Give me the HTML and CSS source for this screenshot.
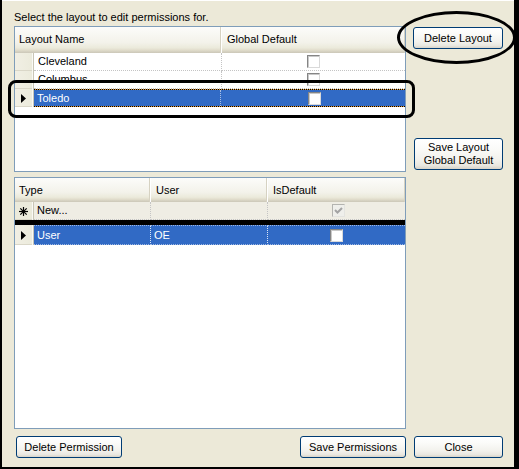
FILE: index.html
```html
<!DOCTYPE html>
<html>
<head>
<meta charset="utf-8">
<link rel="stylesheet" href="styles.css">
</head>
<body>
<div class="window">
  <div class="main">
    <div class="left">
      <div class="label">Select the layout to edit permissions for.</div>
      <div class="grid grid-top">
        <div class="gt">
          <div class="hcell span2">Layout Name</div>
          <div class="hcell hlast">Global Default</div>

          <div class="rh"></div>
          <div class="cell sep">Cleveland</div>
          <div class="cell chk-cell"><span class="chk"></span></div>

          <div class="rh"></div>
          <div class="cell sep">Columbus</div>
          <div class="cell chk-cell"><span class="chk"></span></div>

          <div class="rh"><svg class="tri" width="5" height="9" viewBox="0 0 5 9"><polygon points="0,0 5,4.5 0,9" fill="#000"/></svg></div>
          <div class="selrow">
            <div class="scell ssep">Toledo</div>
            <div class="scell chk-cell"><span class="chk"></span></div>
          </div>
        </div>
      </div>
      <div class="grid grid-bottom">
        <div class="gb">
          <div class="hcell span2">Type</div>
          <div class="hcell">User</div>
          <div class="hcell hlast">IsDefault</div>

          <div class="rh rh-new"><svg class="star" width="9" height="9" viewBox="0 0 9 9"><g stroke="#000" stroke-width="1.2"><line x1="4.5" y1="0" x2="4.5" y2="9"/><line x1="0" y1="4.5" x2="9" y2="4.5"/><line x1="1.3" y1="1.3" x2="7.7" y2="7.7"/><line x1="7.7" y1="1.3" x2="1.3" y2="7.7"/></g></svg></div>
          <div class="cell newcell sep">New...</div>
          <div class="cell newcell sep"></div>
          <div class="cell newcell chk-cell"><span class="chk chk-dis"><svg width="11" height="11" viewBox="0 0 11 11"><polyline points="2,5 4.5,7.5 9,3" fill="none" stroke="#A3A3A3" stroke-width="2"/></svg></span></div>

          <div class="blackbar"></div>

          <div class="rh rh-user"><svg class="tri" width="5" height="9" viewBox="0 0 5 9"><polygon points="0,0 5,4.5 0,9" fill="#000"/></svg></div>
          <div class="ucell usep">User</div>
          <div class="ucell usep">OE</div>
          <div class="ucell chk-cell"><span class="chk"></span></div>
        </div>
      </div>
    </div>
    <div class="right">
      <button class="btn btn-del-layout">Delete Layout</button>
      <button class="btn btn-save-layout">Save Layout<br>Global Default</button>
    </div>
  </div>
  <div class="footer">
    <button class="btn btn-del-perm">Delete Permission</button>
    <button class="btn btn-save-perm">Save Permissions</button>
    <button class="btn btn-close">Close</button>
  </div>
  <div class="anno-ellipse"></div>
  <div class="anno-rect"></div>
</div>
</body>
</html>
```

FILE: styles.css
```css
body {
  margin: 0;
  font-family: "Liberation Sans", Arial, sans-serif;
  font-size: 11px;
  color: #000;
}

.window {
  position: relative;
  width: 519px;
  height: 469px;
  box-sizing: border-box;
  background: #ECE9D8;
  padding: 11px 0 0 14px;
  box-shadow: inset 2px 0 #000, inset -5px 0 #000, inset 0 -2px #000, inset 0 1px #fff;
  display: flex;
  flex-direction: column;
}

.main {
  display: flex;
  gap: 7px;
}

.left {
  width: 392px;
  display: flex;
  flex-direction: column;
}

.label {
  height: 15px;
  line-height: 13px;
  white-space: nowrap;
}

.grid {
  border: 1px solid #7F9DB9;
  background: #fff;
  box-sizing: border-box;
  overflow: hidden;
}

.grid-top { height: 146px; }
.grid-bottom { height: 252px; margin-top: 5px; }

.gt {
  display: grid;
  grid-template-columns: 19px 188px 183px;
  grid-auto-rows: 18px;
  grid-template-rows: 26px;
}

.gb {
  display: grid;
  grid-template-columns: 19px 117px 117px 137px;
  grid-template-rows: 24px 18px 5px 20px;
}

.hcell {
  box-sizing: border-box;
  padding-left: 5px;
  line-height: 24px;
  white-space: nowrap;
  background: linear-gradient(to bottom, #FCFCFA 0%, #F3F2EA 60%, #EBEADB 80%, #E2DECD 88%, #D6D2C2 94%, #CBC7B8 100%);
  box-shadow: inset -1px 0 #FFFFFF, inset -2px 0 #D6D2C2;
}
.hcell.hlast { box-shadow: inset -1px 0 #D6D2C2; }
.span2 { grid-column: span 2; padding-left: 4px; }

.rh {
  box-sizing: border-box;
  background: linear-gradient(to right, #F1EFE4, #EBEADB);
  box-shadow: inset -1px 0 #C9C6B6, inset -2px 0 #FAFAF6, inset 0 -1px #DAD7C8;
  display: flex;
  align-items: center;
  justify-content: center;
}
.rh .tri { margin-left: -3px; }
.rh .star { margin-left: -2px; }

.cell {
  box-sizing: border-box;
  padding-left: 4px;
  line-height: 16px;
  border-bottom: 1px dotted #C4C4C4;
  white-space: nowrap;
  overflow: hidden;
}
.sep { border-right: 1px dotted #C4C4C4; }

.chk-cell {
  display: flex;
  align-items: center;
  justify-content: center;
  padding-left: 0;
}

.chk {
  display: inline-block;
  width: 13px;
  height: 13px;
  box-sizing: border-box;
  border: 1px solid;
  border-color: #858585 #D9D9D9 #D9D9D9 #858585;
  background: #fff;
  box-shadow: inset 1px 1px #C9C9C9;
}
.chk-dis {
  background: #EFEFEB;
  border-color: #B4B4B0 #E4E4E0 #E4E4E0 #B4B4B0;
  box-shadow: none;
  position: relative;
}
.chk-dis svg { display: block; }

.selrow {
  grid-column: 2 / 4;
  display: grid;
  grid-template-columns: 187px 1fr;
  border-top: 1px dotted #000;
  border-bottom: 1px dotted #000;
  background: linear-gradient(#316AC5, #316AC5) padding-box, #E39B3C border-box;
  color: #fff;
}
.scell {
  box-sizing: border-box;
  padding-left: 3px;
  line-height: 16px;
  white-space: nowrap;
}
.ssep { border-right: 1px dotted #A9BFE4; }

.newcell { background: #EFEDE4; padding-left: 3px; }
.rh-new { background: #EBEADB; }

.blackbar {
  grid-column: 1 / 5;
  background: #000;
}

.ucell {
  box-sizing: border-box;
  background: #316AC5;
  color: #fff;
  padding-left: 3px;
  line-height: 19px;
  border-top: 1px dotted #9FB8E2;
  border-bottom: 1px dotted #9FB8E2;
  white-space: nowrap;
}
.ucell.chk-cell { padding-left: 0; }
.usep { border-right: 1px dotted #DCE6F6; }

.right {
  display: flex;
  flex-direction: column;
  width: 90px;
}

.btn {
  box-sizing: border-box;
  font-family: inherit;
  font-size: 11px;
  line-height: 13px;
  color: #000;
  padding: 0;
  margin: 0;
  border: 1px solid #003C74;
  border-radius: 3px;
  background: linear-gradient(to bottom, #FFFFFF 0%, #FBFBF9 30%, #F2F1EC 70%, #E9E7E0 88%, #D8D3C8 100%);
  text-align: center;
  white-space: nowrap;
}

.btn-del-layout { margin-top: 16px; height: 22px; width: 90px; }
.btn-save-layout { margin-top: 89px; height: 32px; width: 89px; margin-left: 1px; }

.footer {
  display: flex;
  margin-top: 7px;
  width: 489px;
  padding-left: 2px;
  box-sizing: border-box;
}
.btn-del-perm { width: 106px; height: 22px; }
.btn-save-perm { width: 106px; height: 22px; margin-left: auto; }
.btn-close { width: 89px; height: 22px; margin-left: 8px; }

.anno-ellipse {
  position: absolute;
  left: 397px;
  top: 11px;
  width: 119px;
  height: 53px;
  box-sizing: border-box;
  border: 3px solid #000;
  border-radius: 50%;
  pointer-events: none;
}

.anno-rect {
  position: absolute;
  left: 8px;
  top: 80px;
  width: 407px;
  height: 38px;
  box-sizing: border-box;
  border: 3px solid #000;
  border-radius: 8px;
  pointer-events: none;
}
```
